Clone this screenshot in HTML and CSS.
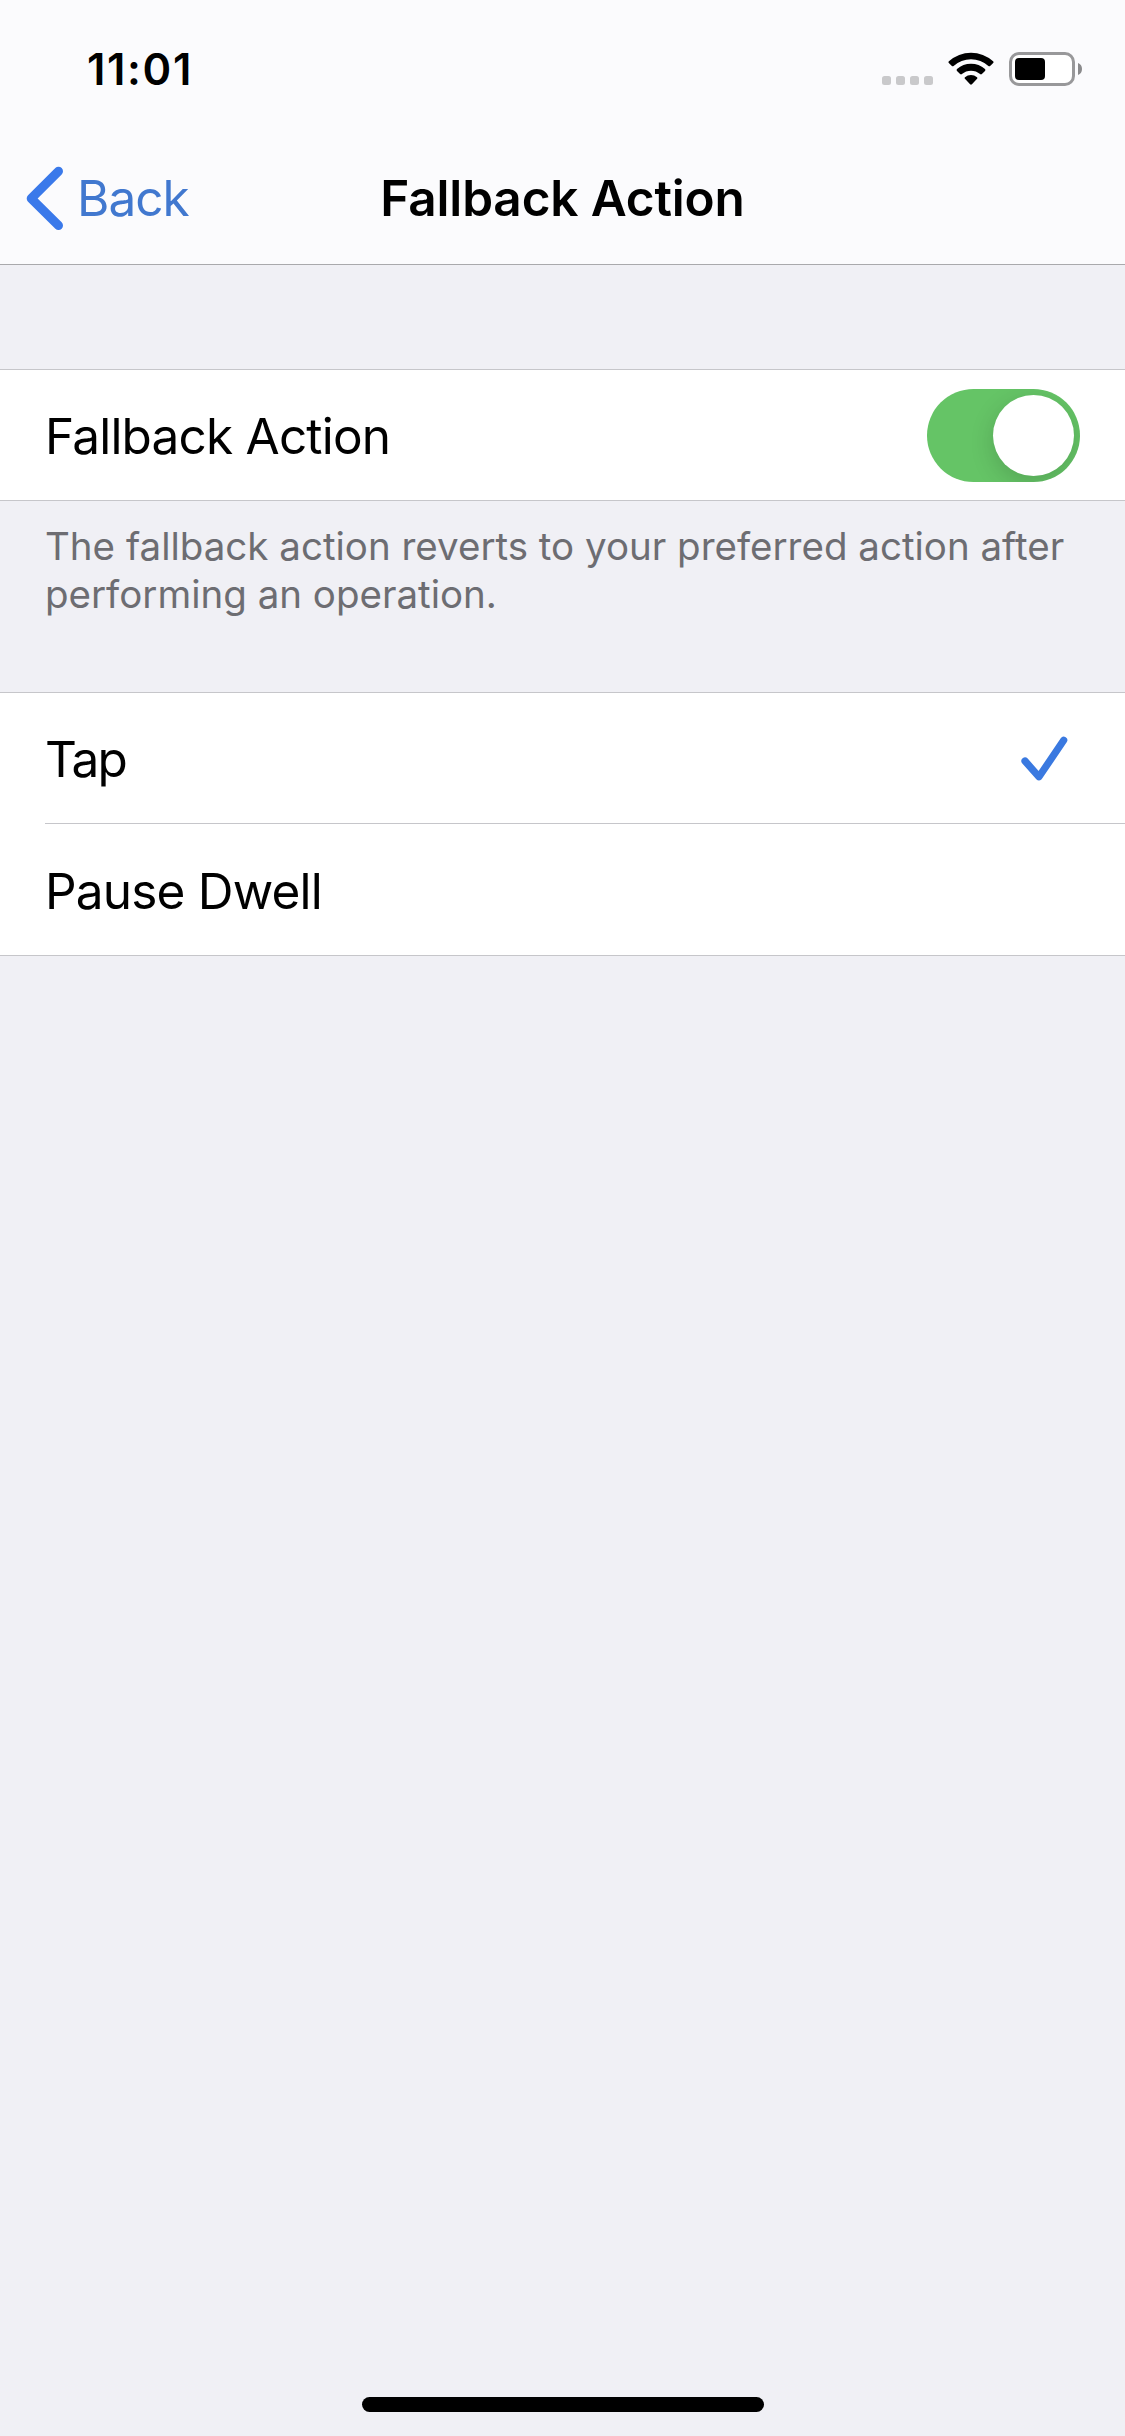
FILE: index.html
```html
<!DOCTYPE html>
<html lang="en">
<head>
<meta charset="utf-8">
<title>Fallback Action</title>
<link rel="stylesheet" href="styles.css">
</head>
<body>
<div class="screen">
  <header class="header">
    <div class="status-bar">
      <span class="time">11:01</span>
      <svg class="status-icons" width="205" height="38" viewBox="0 0 205 38">
        <g fill="#c9c9cb">
          <rect x="2" y="26" width="9" height="9" rx="2.5"/>
          <rect x="16" y="26" width="9" height="9" rx="2.5"/>
          <rect x="30" y="26" width="9" height="9" rx="2.5"/>
          <rect x="44" y="26" width="9" height="9" rx="2.5"/>
        </g>
        <path d="M68.9 11.2A33 33 0 0 1 113.1 11.2Q114 12 113.2 12.9L110.1 15.9Q109.3 16.6 108.4 15.9A26 26 0 0 0 73.6 15.9Q72.7 16.6 71.9 15.9L68.8 12.9Q68 12 68.9 11.2Z"/>
        <path d="M77 19.1A21 21 0 0 1 105 19.1Q105.9 20 105 20.9L101.9 24Q101 24.8 100.1 24.1A14 14 0 0 0 81.9 24.1Q81 24.8 80.1 24L77 20.9Q76.1 20 77 19.1Z"/>
        <path d="M85 27.2A9.5 9.5 0 0 1 97 27.2Q97.9 28 97.1 28.8L91.9 34.3Q91 35.2 90.1 34.3L84.9 28.8Q84.1 28 85 27.2Z"/>
        <rect x="130.5" y="3.5" width="63" height="31" rx="8.5" fill="#fff" stroke="#98989a" stroke-width="3"/>
        <rect x="135" y="8" width="30" height="22" rx="4"/>
        <path d="M198 13Q202 14.5 202 19T198 25Z" fill="#8a8a8c"/>
      </svg>
    </div>
    <nav class="nav">
      <a class="back">
        <svg width="40" height="66" viewBox="0 0 40 66"><path d="M34.5 6.2 7.2 33.5l27.3 27" fill="none" stroke="#3a79ea" stroke-width="9" stroke-linecap="round" stroke-linejoin="round"/></svg>
        <span>Back</span>
      </a>
      <h1 class="title">Fallback Action</h1>
    </nav>
  </header>
  <main class="content">
    <section class="group">
      <div class="row">
        <span class="label">Fallback Action</span>
        <span class="toggle"><span class="knob"></span></span>
      </div>
    </section>
    <p class="note">The fallback action reverts to your preferred action after performing an operation.</p>
    <section class="group">
      <div class="row">
        <span class="label label-short">Tap</span>
        <svg class="check" width="48" height="48" viewBox="0 0 48 48"><path d="M5 27 19 42.8 43.7 6.3" fill="none" stroke="#3a79e0" stroke-width="7.2" stroke-linecap="round" stroke-linejoin="round"/></svg>
      </div>
      <div class="row">
        <span class="label">Pause Dwell</span>
      </div>
    </section>
  </main>
  <div class="home-indicator"></div>
</div>
</body>
</html>
```
FILE: styles.css
```css
* { box-sizing: border-box; }
body {
  margin: 0;
  background: #f0f0f5;
  color: #000;
  font-family: Inter, "Liberation Sans", sans-serif;
}
.screen {
  display: flex;
  flex-direction: column;
  height: 2436px;
  overflow: hidden;
}
.header {
  height: 265px;
  background: #fbfbfd;
  border-bottom: 1px solid #a9a9ac;
}
.status-bar {
  display: flex;
  justify-content: space-between;
  align-items: center;
  height: 132px;
  padding: 6px 40px 0 87px;
}
.time {
  font-size: 43.5px;
  font-weight: 600;
  letter-spacing: 1.65px;
}
.nav {
  display: grid;
  grid-template-columns: 1fr auto 1fr;
  align-items: center;
  height: 132px;
  padding: 0 24px;
}
.back {
  display: flex;
  align-items: center;
  gap: 13px;
  color: #4178cf;
  font-size: 49.5px;
  letter-spacing: -1px;
}
.title {
  margin: 0;
  font-size: 49.5px;
  font-weight: 600;
  letter-spacing: -0.15px;
}
.content {
  flex: 1;
  padding-top: 104px;
}
.group {
  background: #fff;
  border-top: 1px solid #c6c6ca;
  border-bottom: 1px solid #c6c6ca;
  padding-left: 45px;
}
.row {
  display: flex;
  justify-content: space-between;
  align-items: center;
  height: 130px;
  padding-right: 45px;
}
.row + .row {
  height: 132px;
  border-top: 1px solid #c6c6ca;
}
.label {
  padding-top: 2px;
  font-size: 49.5px;
  letter-spacing: -0.8px;
}
.label-short { letter-spacing: -1.8px; }
.toggle {
  display: flex;
  justify-content: flex-end;
  width: 153px;
  height: 93px;
  padding: 6px;
  border-radius: 47px;
  background: #65c466;
  overflow: hidden;
}
.knob {
  width: 81px;
  height: 81px;
  border-radius: 50%;
  background: #fff;
  box-shadow: 0 7px 24px rgba(0, 0, 0, 0.16);
}
.check { margin-right: 12px; }
.note {
  margin: 0;
  height: 191px;
  padding: 21px 45px 0;
  color: #6d6d72;
  font-size: 38.5px;
  line-height: 48px;
}
.home-indicator {
  width: 402px;
  height: 15px;
  margin: 0 auto 24px;
  border-radius: 8px;
  background: #000;
}
```
